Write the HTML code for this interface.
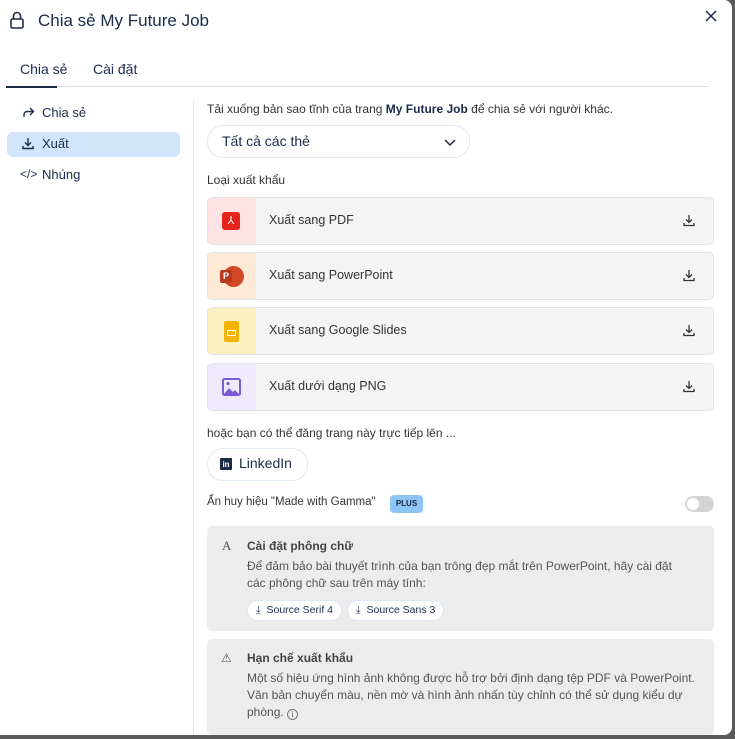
<!DOCTYPE html>
<html><head><meta charset="utf-8"><style>
*{box-sizing:border-box;margin:0;padding:0}
body{width:735px;height:739px;background:#5a5a5a;font-family:"Liberation Sans",sans-serif;color:#1c2a4a;position:relative;overflow:hidden}
.modal{position:absolute;left:0;top:0;width:732px;height:735px;background:#fff;border-radius:0 8px 8px 0;overflow:hidden}
.abs{position:absolute}
.t{font-size:12px;color:#333}
.row{position:absolute;left:207px;width:507px;height:48px;border:1px solid #e2e2e2;border-radius:5px;background:#f4f4f4;overflow:hidden}
.row .ic{position:absolute;left:0;top:0;width:48px;height:100%}
.row .lb{position:absolute;left:61px;top:15px;font-size:12.5px;color:#333}
.row svg.dl{position:absolute;right:18px;top:16px}
.card{position:absolute;left:207px;width:507px;background:#ececec;border-radius:5px}
.pill{display:inline-block;background:#fff;border:1px solid #dde7f5;border-radius:11px;height:21px;padding:0 8px;font-size:10.5px;line-height:19px;color:#1c2a4a;margin-right:5px}
</style></head><body><div class="modal">
<svg class="abs" style="left:9px;top:11px" width="16" height="18" viewBox="0 0 16 18" fill="none" stroke="#1c2a4a" stroke-width="1.6"><rect x="2" y="8" width="12" height="9" rx="1.5"/><path d="M4.5 8V5a3.5 3.5 0 0 1 7 0V8"/></svg>
<div class="abs" style="left:38px;top:11px;font-size:17px;color:#1c2a4a">Chia sẻ My Future Job</div>
<svg class="abs" style="left:705px;top:10px" width="12" height="12" viewBox="0 0 12 12" stroke="#1c2a4a" stroke-width="1.5"><path d="M1 1l10 10M11 1L1 11"/></svg>
<div class="abs" style="left:20px;top:61px;font-size:14px">Chia sẻ</div>
<div class="abs" style="left:93px;top:61px;font-size:14px">Cài đặt</div>
<div class="abs" style="left:6px;top:86px;width:702px;height:1px;background:#ddd"></div>
<div class="abs" style="left:6px;top:86px;width:51px;height:2px;background:#1c2a4a"></div>
<svg class="abs" style="left:22px;top:106px" width="13" height="12" viewBox="0 0 13 12" fill="none" stroke="#1c2a4a" stroke-width="1.4"><path d="M8 2l3.5 3.5L8 9M11.5 5.5H5a3 3 0 0 0-3 3V11"/></svg>
<div class="abs" style="left:42px;top:105px;font-size:13px">Chia sẻ</div>
<div class="abs" style="left:7px;top:132px;width:173px;height:25px;background:#d1e5fb;border-radius:6px"></div>
<svg class="abs" style="left:22px;top:137px" width="12" height="13" viewBox="0 0 12 13" fill="none" stroke="#1c2a4a" stroke-width="1.4"><path d="M6 1v7M3 5.5L6 8.5 9 5.5M1 9v2.5h10V9"/></svg>
<div class="abs" style="left:42px;top:136px;font-size:13px">Xuất</div>
<div class="abs" style="left:20px;top:167px;font-size:12px">&lt;/&gt;</div>
<div class="abs" style="left:42px;top:167px;font-size:13px">Nhúng</div>
<div class="abs" style="left:193px;top:100px;width:1px;height:640px;background:#e6e6e6"></div>
<div class="abs t" style="left:207px;top:102px">Tải xuống bản sao tĩnh của trang <b style="color:#1c2a4a">My Future Job</b> để chia sẻ với người khác.</div>
<div class="abs" style="left:207px;top:125px;width:263px;height:33px;border:1px solid #dde7f5;border-radius:16px"></div>
<div class="abs" style="left:222px;top:133px;font-size:14px">Tất cả các thẻ</div>
<svg class="abs" style="left:444px;top:139px" width="12" height="8" viewBox="0 0 12 8" fill="none" stroke="#1c2a4a" stroke-width="1.5"><path d="M1 1l5 5 5-5"/></svg>
<div class="abs t" style="left:207px;top:173px">Loại xuất khẩu</div>

<div class="row" style="top:197px"><div class="ic" style="background:#fde3e3"><div class="abs" style="left:14px;top:14px;width:18px;height:18px;background:#e5231b;border-radius:3px;color:#fff;font-size:11px;text-align:center;line-height:18px">⅄</div></div><div class="lb">Xuất sang PDF</div><svg class="dl" width="12" height="13" viewBox="0 0 12 13" fill="none" stroke="#333" stroke-width="1.3"><path d="M6 1v7M3 5.5L6 8.5 9 5.5M1 9v2.5h10V9"/></svg></div>
<div class="row" style="top:252px"><div class="ic" style="background:#fde9d6"><div class="abs" style="left:15px;top:13px;width:21px;height:21px;background:#d24726;border-radius:50%"></div><div class="abs" style="left:12px;top:17px;width:12px;height:13px;background:#b7391c;border-radius:2px;color:#fff;font-size:9px;font-weight:bold;text-align:center;line-height:13px">P</div></div><div class="lb">Xuất sang PowerPoint</div><svg class="dl" width="12" height="13" viewBox="0 0 12 13" fill="none" stroke="#333" stroke-width="1.3"><path d="M6 1v7M3 5.5L6 8.5 9 5.5M1 9v2.5h10V9"/></svg></div>
<div class="row" style="top:307px"><div class="ic" style="background:#fdf0c0"><div class="abs" style="left:16px;top:13px;width:15px;height:21px;background:#f5b400;border-radius:2px"></div><div class="abs" style="left:19px;top:22px;width:9px;height:6px;border:1.5px solid #fff"></div></div><div class="lb">Xuất sang Google Slides</div><svg class="dl" width="12" height="13" viewBox="0 0 12 13" fill="none" stroke="#333" stroke-width="1.3"><path d="M6 1v7M3 5.5L6 8.5 9 5.5M1 9v2.5h10V9"/></svg></div>
<div class="row" style="top:363px"><div class="ic" style="background:#efeafd"><svg class="abs" style="left:14px;top:14px" width="19" height="18" viewBox="0 0 19 18"><rect x="1" y="1" width="17" height="16" rx="1.5" fill="none" stroke="#7b5ad8" stroke-width="2"/><path d="M2 16l5-6 4 4 2-2 4 4z" fill="#7b5ad8"/><circle cx="6" cy="5.5" r="1.6" fill="#7b5ad8"/></svg></div><div class="lb">Xuất dưới dạng PNG</div><svg class="dl" width="12" height="13" viewBox="0 0 12 13" fill="none" stroke="#333" stroke-width="1.3"><path d="M6 1v7M3 5.5L6 8.5 9 5.5M1 9v2.5h10V9"/></svg></div>

<div class="abs t" style="left:207px;top:426px">hoặc bạn có thể đăng trang này trực tiếp lên ...</div>
<div class="abs" style="left:207px;top:448px;width:101px;height:33px;border:1px solid #dde7f5;border-radius:16px"></div>
<div class="abs" style="left:220px;top:458px;width:12px;height:12px;background:#1c2a4a;border-radius:1px;color:#fff;font-size:8px;font-weight:bold;line-height:13px;text-align:center">in</div>
<div class="abs" style="left:239px;top:455px;font-size:14px">LinkedIn</div>
<div class="abs t" style="left:207px;top:496px;font-size:11.5px">Ẩn huy hiệu "Made with Gamma"</div>
<div class="abs" style="left:390px;top:495px;width:33px;height:18px;background:#8ec5f7;border-radius:4px;font-size:8px;font-weight:bold;color:#1c2a4a;text-align:center;line-height:18px">PLUS</div>
<div class="abs" style="left:685px;top:496px;width:29px;height:16px;background:#d4d4d4;border-radius:8px"><div style="position:absolute;left:2px;top:2px;width:12px;height:12px;border-radius:50%;background:#fff"></div></div>

<div class="card" style="top:526px;height:105px">
<div class="abs" style="left:15px;top:12px;font-family:'Liberation Serif',serif;font-size:13px;color:#555">A</div>
<div class="abs" style="left:40px;top:13px;font-size:12px;font-weight:bold;color:#444">Cài đặt phông chữ</div>
<div class="abs" style="left:40px;top:32px;font-size:12px;color:#555;line-height:17px;width:435px">Để đảm bảo bài thuyết trình của bạn trông đẹp mắt trên PowerPoint, hãy cài đặt các phông chữ sau trên máy tính:</div>
<div class="abs" style="left:40px;top:74px"><span class="pill">⤓&nbsp; Source Serif 4</span><span class="pill">⤓&nbsp; Source Sans 3</span></div>
</div>
<div class="card" style="top:639px;height:96px">
<div class="abs" style="left:14px;top:12px;font-size:12px;color:#555">⚠</div>
<div class="abs" style="left:40px;top:12px;font-size:12px;font-weight:bold;color:#444">Hạn chế xuất khẩu</div>
<div class="abs" style="left:40px;top:31px;font-size:12px;color:#555;line-height:17px;width:465px">Một số hiệu ứng hình ảnh không được hỗ trợ bởi định dạng tệp PDF và PowerPoint. Văn bản chuyển màu, nền mờ và hình ảnh nhấn tùy chỉnh có thể sử dụng kiểu dự phòng. <span style="display:inline-block;width:11px;height:11px;border:1px solid #777;border-radius:50%;font-size:8px;line-height:10px;text-align:center;vertical-align:-1px">i</span></div>
</div>
</div></body></html>
